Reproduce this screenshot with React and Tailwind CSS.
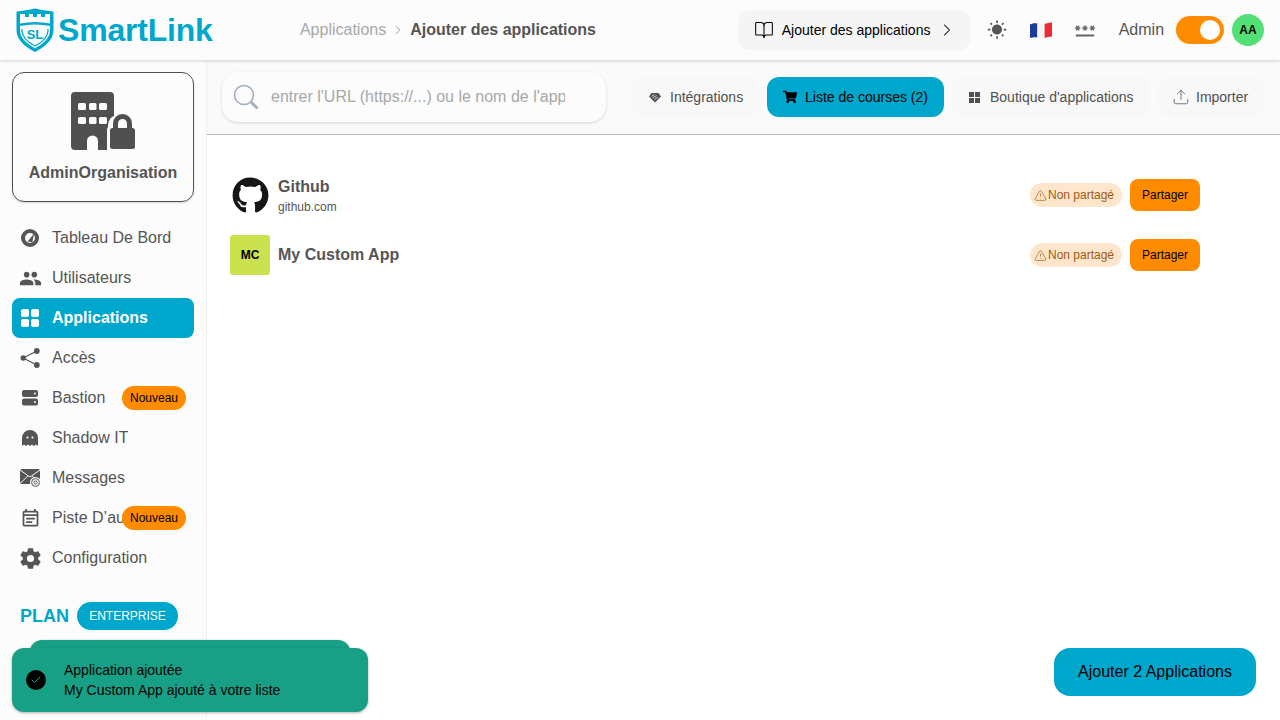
import React from "react";
import { ChevronRight, BookOpen, Upload, TriangleAlert, Check } from "lucide-react";
import { FaShoppingCart, FaGithub } from "react-icons/fa";
import { IoSettingsSharp } from "react-icons/io5";
import { MdPeople, MdPassword, MdWbSunny, MdOutlineEventNote } from "react-icons/md";

const fontSans = { fontFamily: '"Liberation Sans", Arial, sans-serif' };

const GaugeIcon = () => (
  <svg viewBox="0 0 20 20" className="w-5 h-5" fill="none">
    <circle cx="10" cy="10" r="7" stroke="currentColor" strokeWidth="4" />
    <path d="M7.6 13.6 L14 5.4 L12.4 14.2 Z" fill="currentColor" />
  </svg>
);

const AppsIcon = () => (
  <svg viewBox="0 0 20 20" className="w-5 h-5" fill="currentColor">
    <rect x="1" y="1" width="8" height="8" rx="2" />
    <rect x="11" y="1" width="8" height="8" rx="2" />
    <rect x="1" y="11" width="8" height="8" rx="2" />
    <rect x="11" y="11" width="8" height="8" rx="2" />
  </svg>
);

const ShareIcon = () => (
  <svg viewBox="0 0 20 20" className="w-5 h-5" fill="currentColor" stroke="currentColor">
    <path d="M3 10 L17 3 M3 10 L17 17" fill="none" strokeWidth="1.3" />
    <circle cx="3.2" cy="10" r="2.7" stroke="none" />
    <circle cx="16.8" cy="3" r="2.9" stroke="none" />
    <circle cx="16.8" cy="17" r="2.9" stroke="none" />
  </svg>
);

const ServerIcon = () => (
  <svg viewBox="0 0 16 16" className="w-4 h-4">
    <rect x="0" y="0" width="16" height="7" rx="2" fill="currentColor" />
    <rect x="0" y="8.6" width="16" height="7" rx="2" fill="currentColor" />
    <circle cx="13" cy="3.5" r="1" fill="#fcfcfc" />
    <circle cx="13" cy="12.1" r="1" fill="#fcfcfc" />
  </svg>
);

const GhostIcon = () => (
  <svg viewBox="0 0 16 16" className="w-4 h-4">
    <path
      d="M0 16 V8 A8 8 0 0 1 16 8 V16 L14 14.4 L12 16 L10 14.4 L8 16 L6 14.4 L4 16 L2 14.4 Z"
      fill="currentColor"
    />
    <circle cx="5.5" cy="7.5" r="1.1" fill="#fcfcfc" />
    <circle cx="10.5" cy="7.5" r="1.1" fill="#fcfcfc" />
  </svg>
);

const MailAtIcon = () => (
  <svg viewBox="0 0 21 20" className="w-[21px] h-5">
    <rect x="0" y="1" width="20" height="15" rx="1.5" fill="currentColor" />
    <path d="M0 2 L10 9 L20 2 M0 15.5 L8 7.8 M20 15.5 L12 7.8" fill="none" stroke="#fcfcfc" strokeWidth="1" />
    <circle cx="15.5" cy="14.5" r="5.5" fill="#fcfcfc" />
    <circle cx="15.5" cy="14.5" r="3.9" fill="none" stroke="currentColor" strokeWidth="1" />
    <circle cx="15.5" cy="14.5" r="1.6" fill="none" stroke="currentColor" strokeWidth="1" />
  </svg>
);

const Logo = () => (
  <svg viewBox="0 0 38 44" className="w-[38px] h-[44px]">
    <path
      d="M0.5 3.5 C7 3 13 2 19 0.5 C25 2 31 3 37.5 3.5 V22 C37.5 32 29 39 19 44 C9 39 0.5 32 0.5 22 Z"
      fill="#00a7cc"
    />
    <path
      d="M4 6 H9 V9 H13 V6 H17 V9 H21 V6 H25 V9 H29 V6 H34 V15.5 C24 13.5 14 13.5 4 15.5 Z"
      fill="#fcfcfc"
    />
    <path
      d="M4 18 C14 16 24 16 34 18 V22 C34 30 27 36 19 40.2 C11 36 4 30 4 22 Z"
      fill="#fcfcfc"
    />
    <path
      d="M6 21 V23 C6.5 30 13 35 19 38 C25 35 31.5 30 32 23 V21"
      fill="none"
      stroke="#00a7cc"
      strokeWidth="1.3"
    />
    <text x="19" y="31" textAnchor="middle" fontSize="13" fontWeight="700" fill="#00a7cc" style={fontSans}>
      SL
    </text>
  </svg>
);

const BuildingLock = () => (
  <svg viewBox="0 0 64 58" className="w-16 h-[58px]" fill="#505050">
    <path d="M4 0 H39 A4 4 0 0 1 43 4 V24 C38.5 26 37 30 37 35 C36 36 36 37 36 40 V58 H27 V49 A5.5 5.5 0 0 0 16 49 V58 H4 A4 4 0 0 1 0 54 V4 A4 4 0 0 1 4 0 Z" />
    <g fill="#fcfcfc">
      <rect x="7" y="11" width="8" height="7" rx="1.5" />
      <rect x="18" y="11" width="7.5" height="7" rx="1.5" />
      <rect x="28" y="11" width="8" height="7" rx="1.5" />
      <rect x="7" y="25" width="8" height="7" rx="1.5" />
      <rect x="18" y="25" width="7.5" height="7" rx="1.5" />
      <rect x="28" y="25" width="8" height="7" rx="1.5" />
    </g>
    <path
      fillRule="evenodd"
      d="M42 36 V31.5 A9.5 9.5 0 0 1 61 31.5 V36 H61.5 A2.5 2.5 0 0 1 64 38.5 V54.5 A2.5 2.5 0 0 1 61.5 57 H41.5 A2.5 2.5 0 0 1 39 54.5 V38.5 A2.5 2.5 0 0 1 41.5 36 Z M47 36 H56 V31.5 A4.5 4.5 0 0 0 47 31.5 Z"
    />
  </svg>
);

const FrenchFlag = () => (
  <svg viewBox="0 0 22 17" className="w-[22px] h-[17px]">
    <path d="M0 2.5 C3 1 5 1 7.4 1.4 V15.6 C5 15 3 15 0 16 Z" fill="#1a3d9c" />
    <path d="M7.4 1.4 C10 2 12 2.2 14.6 1.8 V15.8 C12 16.2 10 16 7.4 15.6 Z" fill="#f5f5f5" />
    <path d="M14.6 1.8 C17 1.4 19 1 22 0.6 V14.6 C19 15 17 15.4 14.6 15.8 Z" fill="#ee2a39" />
  </svg>
);

const IntegrationIcon = () => (
  <svg viewBox="0 0 14 14" className="w-3.5 h-3.5">
    <path d="M7 12.5 L1 6.5 L3.5 3 H10.5 L13 6.5 Z" fill="#505050" />
    <path d="M3.5 6.5 L6.5 4.5 M5 8 L8.5 5.5 M6.5 9.5 L10 7" fill="none" stroke="#f8f8f8" strokeWidth="0.8" />
  </svg>
);

const GridIcon = () => (
  <svg viewBox="0 0 11 11" className="w-[11px] h-[11px]" fill="#505050">
    <rect x="0" y="0" width="5" height="5" />
    <rect x="6" y="0" width="5" height="5" />
    <rect x="0" y="6" width="5" height="5" />
    <rect x="6" y="6" width="5" height="5" />
  </svg>
);

const menuItems = [
  { name: "Tableau De Bord", icon: <GaugeIcon /> },
  { name: "Utilisateurs", icon: <MdPeople size={23} /> },
  { name: "Applications", icon: <AppsIcon />, active: true },
  { name: "Accès", icon: <ShareIcon /> },
  { name: "Bastion", icon: <ServerIcon />, badge: true },
  { name: "Shadow IT", icon: <GhostIcon /> },
  { name: "Messages", icon: <MailAtIcon /> },
  { name: "Piste D’audit", icon: <MdOutlineEventNote size={21} />, badge: true },
  { name: "Configuration", icon: <IoSettingsSharp size={23} /> },
];

const tabs = [
  { name: "Intégrations", icon: <IntegrationIcon />, box: "w-[127px] pl-4 gap-2" },
  { name: "Liste de courses (2)", icon: <FaShoppingCart size={14} />, active: true, box: "w-[177px] pl-4 gap-2" },
  { name: "Boutique d'applications", icon: <GridIcon />, box: "w-[198px] pl-[17px] gap-[10px]" },
  { name: "Importer", icon: <Upload size={18} strokeWidth={1} />, box: "w-[106px] pl-[14px] gap-1.5" },
];

const NonShared = () => (
  <span className="flex items-center h-6 w-[92px] pl-1 rounded-full bg-[#fee6cc] text-[#a05a10] text-xs">
    <TriangleAlert size={13} strokeWidth={1.25} />
    <span className="ml-px">Non partagé</span>
  </span>
);

const ShareButton = () => (
  <button className="ml-2 w-[70px] h-8 rounded-lg bg-[#ff8c00] text-black text-xs">Partager</button>
);

export default function App() {
  return (
    <div className="relative w-[1280px] h-[720px] overflow-hidden flex flex-col bg-white text-[#555555]" style={fontSans}>
      {/* Header */}
      <header className="relative z-10 h-[60px] shrink-0 flex items-center pl-4 pr-4 bg-[#fcfcfc] shadow-[0_1px_3px_rgba(0,0,0,0.18)]">
        <Logo />
        <span className="ml-1 w-[242px] text-[32px] font-bold tracking-[-0.2px] text-[#00a7cc]">SmartLink</span>
        <nav className="w-[438px] flex items-center text-base">
          <span className="text-[#a8a8a8]">Applications</span>
          <ChevronRight size={14} strokeWidth={1.25} className="mx-[5px] text-[#777]" />
          <span className="font-bold">Ajouter des applications</span>
        </nav>
        <button className="w-[233px] h-10 flex items-center pl-4 rounded-xl bg-[#f5f5f5] text-sm text-black">
          <BookOpen size={20} strokeWidth={1.25} />
          <span className="ml-2">Ajouter des applications</span>
          <ChevronRight size={20} strokeWidth={1.25} className="ml-[7px]" />
        </button>
        <MdWbSunny size={20} className="ml-4" />
        <span className="ml-[23px]"><FrenchFlag /></span>
        <MdPassword size={22} className="ml-[22px] opacity-90" />
        <span className="ml-[23px] text-base">Admin</span>
        <div className="ml-3 w-12 h-7 flex items-center justify-end pr-1 rounded-full bg-[#ff8c00]">
          <span className="w-5 h-5 rounded-full bg-white" />
        </div>
        <div className="ml-2 w-8 h-8 flex items-center justify-center rounded-full bg-[#53e076] text-xs font-bold text-black">AA</div>
      </header>

      <div className="flex-1 flex min-h-0">
        {/* Sidebar */}
        <aside className="w-[207px] shrink-0 px-3 pt-3 bg-[#fcfcfc] border-r border-[#f0f0f0]">
          <div className="h-[130px] flex flex-col items-center pt-[19px] rounded-xl border border-[#505050] shadow-[0_1px_2px_rgba(0,0,0,0.15)]">
            <BuildingLock />
            <span className="mt-[11px] text-base font-bold">AdminOrganisation</span>
          </div>
          <ul className="mt-4">
            {menuItems.map((item) => (
              <li
                key={item.name}
                className={`relative h-10 flex items-center rounded-lg text-base ${
                  item.active ? "bg-[#00a7cc] text-white font-bold" : ""
                }`}
              >
                <span className="w-9 mr-1 flex justify-center shrink-0">{item.icon}</span>
                <span className="whitespace-nowrap overflow-hidden">{item.name}</span>
                {item.badge && (
                  <span className="absolute right-2 top-2 w-16 h-6 flex items-center justify-center rounded-full bg-[#ff8c00] text-xs text-black">
                    Nouveau
                  </span>
                )}
              </li>
            ))}
          </ul>
          <div className="mt-[24px] pl-2 flex items-center">
            <span className="text-lg font-bold text-[#00a7cc]">PLAN</span>
            <span className="ml-2 w-[101px] h-7 flex items-center justify-center rounded-full bg-[#00a7cc] text-xs text-white">ENTERPRISE</span>
          </div>
        </aside>

        {/* Main */}
        <main className="flex-1 min-w-0 flex flex-col">
          <div className="h-[75px] shrink-0 flex items-start pl-[15px] pr-4 pt-3 bg-[#fafafa] border-b border-[#b8b8b8]">
            <div className="w-[384px] h-[50px] flex items-center pl-[11px] rounded-2xl bg-[#fcfcfc] shadow-[0_1px_3px_rgba(0,0,0,0.15)]">
              <svg viewBox="0 0 26 26" className="w-[26px] h-[26px]" fill="none">
                <circle cx="11" cy="11" r="9.5" stroke="#a3aebf" strokeWidth="1.6" />
                <path d="M18 18 L24.5 24.5" stroke="#a3aebf" strokeWidth="3" />
              </svg>
              <input
                readOnly
                placeholder="entrer l'URL (https://...) ou le nom de l'application"
                className="ml-[12px] w-[294px] bg-transparent text-base outline-none placeholder:text-[#a8a8a8]"
              />
            </div>
            <div className="ml-[26px] mt-[5px] flex gap-2">
              {tabs.map((tab) => (
                <button
                  key={tab.name}
                  className={`${tab.box} h-10 flex items-center rounded-xl text-sm ${
                    tab.active ? "bg-[#00a7cc] text-black" : "bg-[#f8f8f8] text-[#505050]"
                  }`}
                >
                  {tab.icon}
                  <span>{tab.name}</span>
                </button>
              ))}
            </div>
          </div>

          <div className="flex-1 flex flex-col bg-white pt-[30px] pl-[23px] pr-[80px]">
            <div className="h-[60px] flex items-center">
              <span className="w-10 flex justify-center text-[#161616]"><FaGithub size={37} /></span>
              <div className="ml-[9px] flex-1 pt-0.5">
                <div className="text-base font-bold leading-5 -ml-px">Github</div>
                <div className="text-xs leading-4 mt-0.5 -ml-px">github.com</div>
              </div>
              <NonShared />
              <ShareButton />
            </div>
            <div className="h-[60px] flex items-center">
              <span className="w-10 h-10 flex items-center justify-center rounded-[3px] bg-[#cbe14f] text-xs font-bold text-black">MC</span>
              <div className="ml-2 flex-1 text-base font-bold">My Custom App</div>
              <NonShared />
              <ShareButton />
            </div>
            <div className="mt-auto mb-6 -mr-14 self-end">
              <button className="w-[202px] h-12 rounded-2xl bg-[#00a7cc] text-base text-black">Ajouter 2 Applications</button>
            </div>
          </div>
        </main>
      </div>

      {/* Toasts */}
      <div className="absolute left-[30px] top-[640px] w-[320px] h-16 rounded-xl bg-[#17a085] shadow-[0_1px_3px_rgba(0,0,0,0.4)]" />
      <div className="absolute left-3 top-[648px] w-[356px] h-16 flex items-center pl-[14px] rounded-xl bg-[#17a085] text-sm text-black shadow-[0_1px_3px_rgba(0,0,0,0.3)]">
        <span className="w-5 h-5 flex items-center justify-center rounded-full bg-black text-[#17a085]">
          <Check size={12} strokeWidth={2} />
        </span>
        <div className="ml-[18px] leading-5">
          <div>Application ajoutée</div>
          <div>My Custom App ajouté à votre liste</div>
        </div>
      </div>
    </div>
  );
}
